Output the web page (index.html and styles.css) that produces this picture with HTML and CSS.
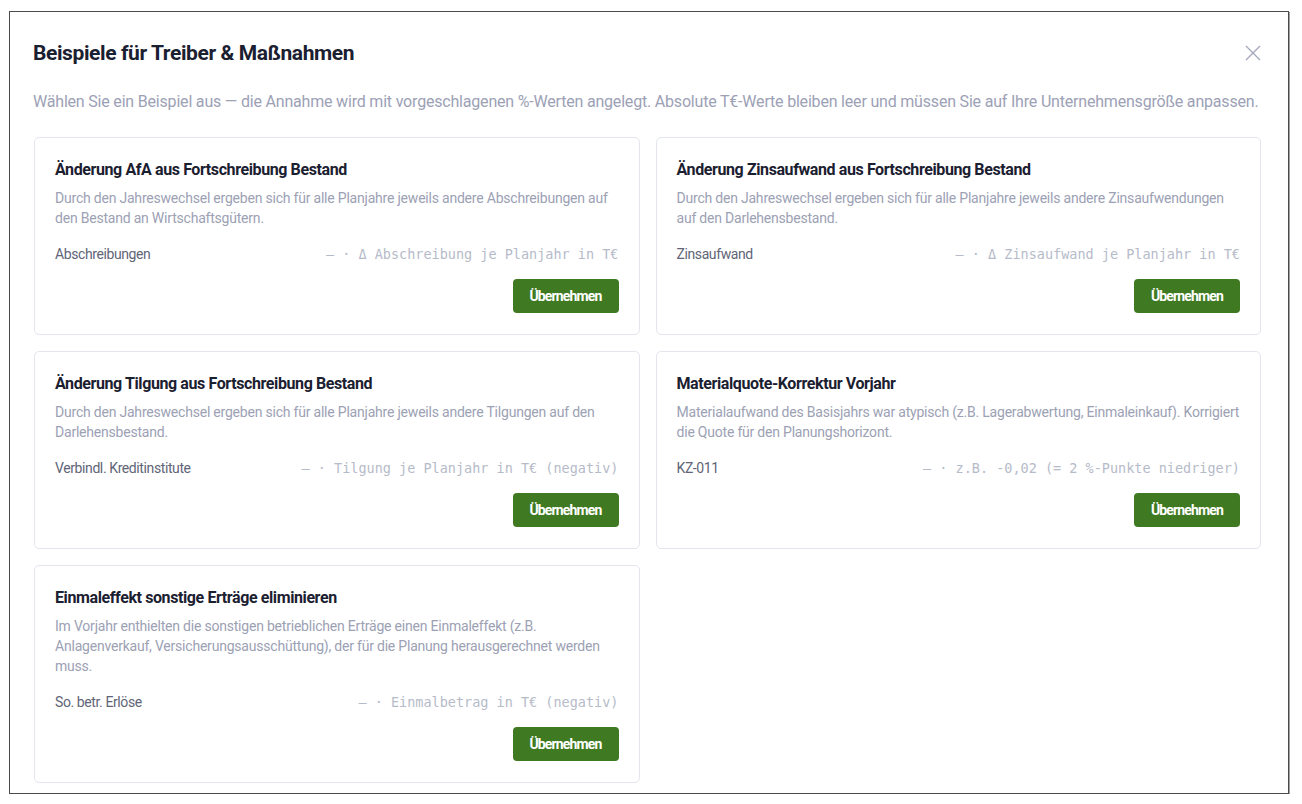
FILE: index.html
```html
<!DOCTYPE html>
<html lang="de">
<head>
    <meta charset="UTF-8">
    <meta name="viewport" content="width=device-width, initial-scale=1.0">
    <title>Beispiele für Treiber &amp; Maßnahmen</title>
    <link rel="stylesheet" href="styles.css">
</head>
<body>

    <div class="modal">
        <!-- Kopfzeile mit Titel und Schließen-Knopf -->
        <div class="modal-header">
            <h2 class="modal-title">Beispiele für Treiber &amp; Maßnahmen</h2>
            <button class="close-btn" aria-label="Schließen">
                <svg width="16" height="16" viewBox="0 0 16 16">
                    <path d="M1 1 L15 15 M15 1 L1 15" stroke="currentColor" stroke-width="1.4" fill="none"/>
                </svg>
            </button>
        </div>

        <p class="modal-intro">Wählen Sie ein Beispiel aus — die Annahme wird mit vorgeschlagenen %-Werten angelegt. Absolute T€-Werte bleiben leer und müssen Sie auf Ihre Unternehmensgröße anpassen.</p>

        <!-- Beispielkarten -->
        <div class="example-grid">
            <div class="example-card">
                <h3 class="example-title">Änderung AfA aus Fortschreibung Bestand</h3>
                <p class="example-desc">Durch den Jahreswechsel ergeben sich für alle Planjahre jeweils andere Abschreibungen auf den Bestand an Wirtschaftsgütern.</p>
                <div class="example-field">
                    <span class="field-name">Abschreibungen</span>
                    <span class="field-hint">— · Δ Abschreibung je Planjahr in T€</span>
                </div>
                <div class="example-actions">
                    <button class="btn-apply">Übernehmen</button>
                </div>
            </div>

            <div class="example-card">
                <h3 class="example-title">Änderung Zinsaufwand aus Fortschreibung Bestand</h3>
                <p class="example-desc">Durch den Jahreswechsel ergeben sich für alle Planjahre jeweils andere Zinsaufwendungen auf den Darlehensbestand.</p>
                <div class="example-field">
                    <span class="field-name">Zinsaufwand</span>
                    <span class="field-hint">— · Δ Zinsaufwand je Planjahr in T€</span>
                </div>
                <div class="example-actions">
                    <button class="btn-apply">Übernehmen</button>
                </div>
            </div>

            <div class="example-card">
                <h3 class="example-title">Änderung Tilgung aus Fortschreibung Bestand</h3>
                <p class="example-desc">Durch den Jahreswechsel ergeben sich für alle Planjahre jeweils andere Tilgungen auf den Darlehensbestand.</p>
                <div class="example-field">
                    <span class="field-name">Verbindl. Kreditinstitute</span>
                    <span class="field-hint">— · Tilgung je Planjahr in T€ (negativ)</span>
                </div>
                <div class="example-actions">
                    <button class="btn-apply">Übernehmen</button>
                </div>
            </div>

            <div class="example-card">
                <h3 class="example-title">Materialquote-Korrektur Vorjahr</h3>
                <p class="example-desc">Materialaufwand des Basisjahrs war atypisch (z.B. Lagerabwertung, Einmaleinkauf). Korrigiert die Quote für den Planungshorizont.</p>
                <div class="example-field">
                    <span class="field-name">KZ-011</span>
                    <span class="field-hint">— · z.B. -0,02 (= 2 %-Punkte niedriger)</span>
                </div>
                <div class="example-actions">
                    <button class="btn-apply">Übernehmen</button>
                </div>
            </div>

            <div class="example-card">
                <h3 class="example-title">Einmaleffekt sonstige Erträge eliminieren</h3>
                <p class="example-desc">Im Vorjahr enthielten die sonstigen betrieblichen Erträge einen Einmaleffekt (z.B. Anlagenverkauf, Versicherungsausschüttung), der für die Planung herausgerechnet werden muss.</p>
                <div class="example-field">
                    <span class="field-name">So. betr. Erlöse</span>
                    <span class="field-hint">— · Einmalbetrag in T€ (negativ)</span>
                </div>
                <div class="example-actions">
                    <button class="btn-apply">Übernehmen</button>
                </div>
            </div>
        </div>
    </div>

</body>
</html>
```

FILE: styles.css
```css
body {
    font-family: Roboto, "Liberation Sans", sans-serif;
    letter-spacing: -0.025em;
    background-color: #ffffff;
    margin: 0;
    padding: 11px 0 0 9px;
}

.modal {
    width: 1280px;
    height: 783px;
    box-sizing: border-box;
    background-color: #ffffff;
    border: 1px solid #4a4a4a;
    box-shadow: 1px 1px 0 #a0a0a0;
    padding: 26px 27px 0 23px;
}

.modal-header {
    display: flex;
    justify-content: space-between;
    align-items: center;
    height: 30px;
}

.modal-title {
    margin: 0;
    font-size: 21px;
    font-weight: 700;
    color: #1b2030;
}

.close-btn {
    background: none;
    border: none;
    padding: 0;
    width: 16px;
    height: 16px;
    color: #a4a9bb;
    cursor: pointer;
}

.modal-intro {
    margin: 24px 0 25px;
    font-size: 16px;
    line-height: 20px;
    letter-spacing: -0.012em;
    color: #9ca1b6;
}

.example-grid {
    display: grid;
    grid-template-columns: 1fr 1fr;
    gap: 16px;
    margin-left: 1px;
    align-items: start;
}

.example-card {
    border: 1px solid #e3e6ee;
    border-radius: 5px;
    padding: 21px 20px;
}

.example-title {
    margin: 0 0 7px;
    font-size: 16px;
    line-height: 22px;
    font-weight: 700;
    color: #1b2030;
}

.example-desc {
    margin: 0;
    font-size: 14px;
    line-height: 20px;
    letter-spacing: -0.015em;
    color: #9ca1b4;
}

.example-field {
    display: flex;
    justify-content: space-between;
    align-items: center;
    margin-top: 16px;
    line-height: 20px;
}

.field-name {
    font-size: 14px;
    color: #5f6577;
}

.field-hint {
    font-family: "DejaVu Sans Mono", "Liberation Mono", monospace;
    font-size: 13.5px;
    letter-spacing: 0;
    color: #b6bbc9;
}

.example-actions {
    display: flex;
    justify-content: flex-end;
    margin-top: 15px;
}

.btn-apply {
    width: 106px;
    height: 34px;
    padding: 0;
    background-color: #3f7a22;
    color: #ffffff;
    border: none;
    border-radius: 4px;
    font-family: Roboto, "Liberation Sans", sans-serif;
    font-size: 14px;
    font-weight: 700;
    letter-spacing: -0.06em;
    cursor: pointer;
}
```
